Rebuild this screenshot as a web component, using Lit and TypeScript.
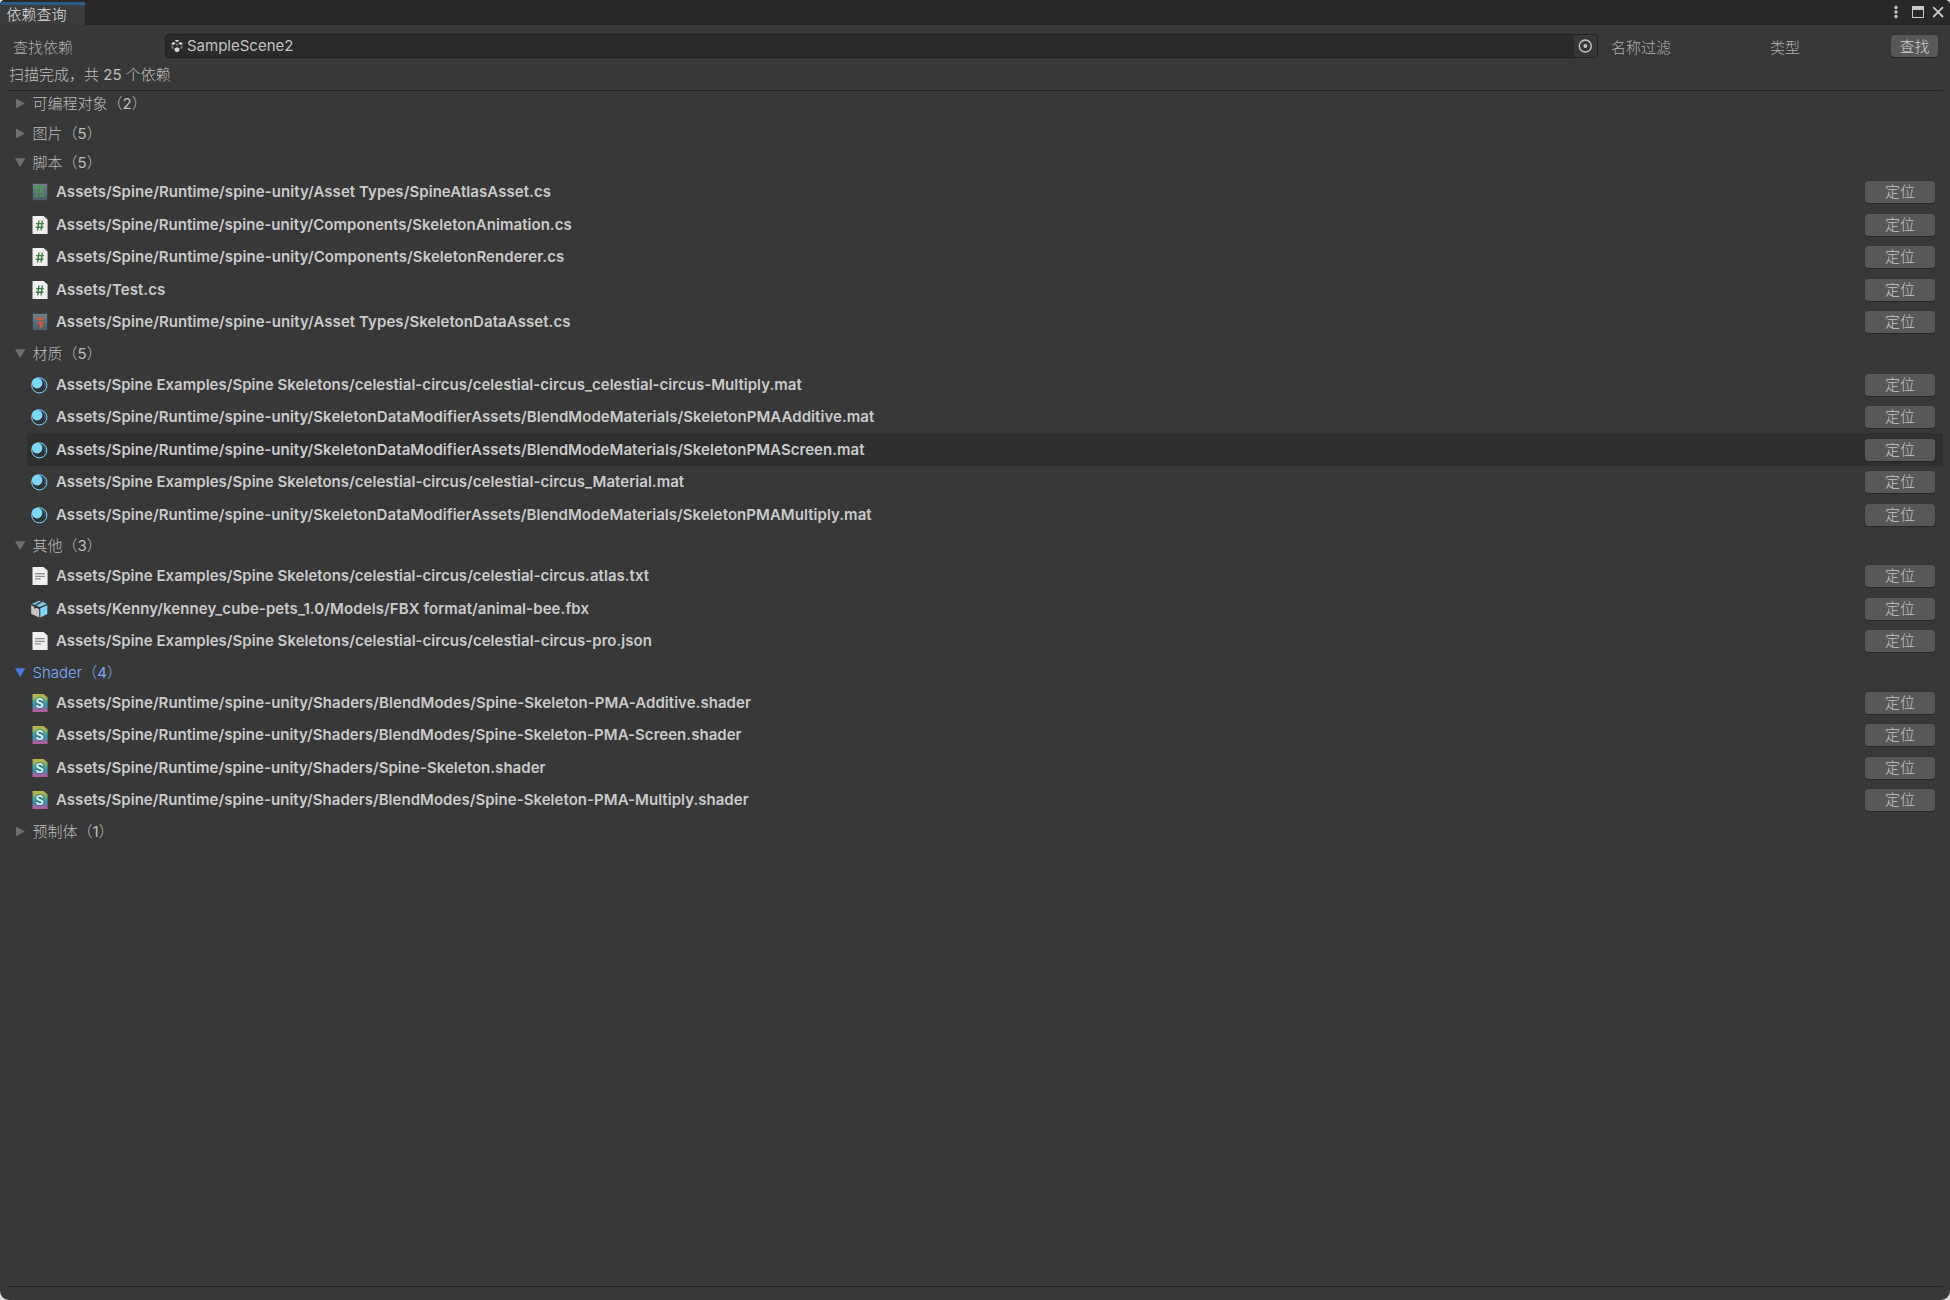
import { LitElement, html, css, svg, nothing } from "lit";
import { customElement, property } from "lit/decorators.js";
import { classMap } from "lit/directives/class-map.js";

type Kind = "atlas" | "cs" | "skeleton" | "mat" | "txt" | "fbx" | "shader";
interface Asset { kind: Kind; path: string; track: number; hover?: boolean }
interface Group { title: string; count: number; above: number; below: number; open: boolean; active?: boolean; items: Asset[] }

const RT = "Assets/Spine/Runtime/spine-unity/";
const EX = "Assets/Spine Examples/Spine Skeletons/celestial-circus/";
const BLEND = RT + "SkeletonDataModifierAssets/BlendModeMaterials/";

const groups: Group[] = [
  { title: "可编程对象", count: 2, above: 0, below: 0, open: false, items: [] },
  { title: "图片", count: 5, above: 3.5, below: 0, open: false, items: [] },
  { title: "脚本", count: 5, above: 3.2, below: 0.3, open: true, items: [
    { kind: "atlas", track: 0.067, path: RT + "Asset Types/SpineAtlasAsset.cs" },
    { kind: "cs", track: 0.05, path: RT + "Components/SkeletonAnimation.cs" },
    { kind: "cs", track: 0.063, path: RT + "Components/SkeletonRenderer.cs" },
    { kind: "cs", track: 0.09, path: "Assets/Test.cs" },
    { kind: "skeleton", track: 0.068, path: RT + "Asset Types/SkeletonDataAsset.cs" },
  ] },
  { title: "材质", count: 5, above: 2.2, below: 1.7, open: true, items: [
    { kind: "mat", track: 0.025, path: EX + "celestial-circus_celestial-circus-Multiply.mat" },
    { kind: "mat", track: 0.053, path: BLEND + "SkeletonPMAAdditive.mat" },
    { kind: "mat", track: 0.05, path: BLEND + "SkeletonPMAScreen.mat", hover: true },
    { kind: "mat", track: 0.027, path: EX + "celestial-circus_Material.mat" },
    { kind: "mat", track: 0.048, path: BLEND + "SkeletonPMAMultiply.mat" },
  ] },
  { title: "其他", count: 3, above: 2.6, below: 0.6, open: true, items: [
    { kind: "txt", track: 0.028, path: EX + "celestial-circus.atlas.txt" },
    { kind: "fbx", track: 0.09, path: "Assets/Kenny/kenney_cube-pets_1.0/Models/FBX format/animal-bee.fbx" },
    { kind: "txt", track: 0.03, path: EX + "celestial-circus-pro.json" },
  ] },
  { title: "Shader", count: 4, above: 2.1, below: 0.8, open: true, active: true, items: [
    { kind: "shader", track: 0.045, path: RT + "Shaders/BlendModes/Spine-Skeleton-PMA-Additive.shader" },
    { kind: "shader", track: 0.035, path: RT + "Shaders/BlendModes/Spine-Skeleton-PMA-Screen.shader" },
    { kind: "shader", track: 0.035, path: RT + "Shaders/Spine-Skeleton.shader" },
    { kind: "shader", track: 0.035, path: RT + "Shaders/BlendModes/Spine-Skeleton-PMA-Multiply.shader" },
  ] },
  { title: "预制体", count: 1, above: 2.8, below: 0, open: false, items: [] },
];

const page = "M2.9 1H13.6L17.6 4.600V18.4Q17.6 19 17 19H3.1Q2.500 19 2.500 18.4V1.6Q2.500 1 2.9 1Z";

const glyphs: Record<Kind, unknown> = {
  atlas: svg`
    <defs><linearGradient id="a" x1="0" y1="0" x2="0" y2="1"><stop offset="0" stop-color="#6e8088"/><stop offset="1" stop-color="#4c5d68"/></linearGradient></defs>
    <rect x="2" y="1" width="16" height="18" fill="#2b3339"/>
    <rect x="2.7" y="1.7" width="14.6" height="16.6" fill="url(#a)"/>
    <path fill="#45a049" d="M5 4H9V7H5ZM10 4H14V6.500H10ZM5 8.500H8.500V11H5ZM10 8H12.500V11H10ZM5 12.500H7.500V15H5ZM9.500 13H11.500V15H9.500ZM12.500 11.500H14V15H12.500Z"/>`,
  skeleton: svg`
    <defs><linearGradient id="a" x1="0" y1="0" x2="0" y2="1"><stop offset="0" stop-color="#6e8088"/><stop offset="1" stop-color="#4c5d68"/></linearGradient></defs>
    <rect x="2" y="1" width="16" height="18" fill="#2b3339"/>
    <rect x="2.700" y="1.700" width="14.600" height="16.600" fill="url(#a)"/>
    <path fill="#f0502c" d="M7.500 5.500H12.500V8H7.500ZM8 9.500H12.700V11.500H11V12.300H12.500V15.500H9.800V13H9.500V11.500H8Z"/>`,
  cs: svg`
    <path d=${page} fill="#f0f0f0"/>
    <path d="M8.900 5.500L7.700 15.300M12.300 5.500L11.100 15.300M6.200 8.600H13.900M5.800 12.200H13.500" stroke="#3f7a45" stroke-width="1.400" fill="none"/>`,
  mat: svg`
    <circle cx="9.300" cy="10.300" r="7.600" fill="#2c3438" stroke="#7fd6fd" stroke-width="1"/>
    <circle cx="7.100" cy="8.100" r="5.300" fill="#7fd6fd"/>
    <path d="M10.500 3.800A6.200 6.200 0 0 1 14.800 12" stroke="#58808f" stroke-width=".8" fill="none"/>`,
  txt: svg`
    <path d=${page} fill="#f0f0f0"/>
    <path d="M5 7.700H14.700M5 10.300H14.700M5 12.900H10.700" stroke="#8c8c8c" stroke-width="1.300"/>`,
  fbx: svg`
    <path d="M1.200 6.200L4 7.800V10L6.300 8.700L9.200 10.300V18.600L1.200 14.800Z" fill="#c8c8c8"/>
    <path d="M10.300 9.200L17.300 6.300V14.900L10.300 18.600Z" fill="#7fd6fd"/>
    <path d="M1.900 5.100L9 1.700L11 2.300L4.700 6.100ZM6 6.700L12.800 2.800L16.800 4.900L9.800 8.100Z" fill="#7fc4e6"/>`,
  shader: svg`
    <defs><linearGradient id="g" x1="0" y1="0" x2="0" y2="1">
      <stop offset="0" stop-color="#c2b648"/><stop offset=".22" stop-color="#9cb35a"/>
      <stop offset=".45" stop-color="#35a7a0"/><stop offset=".68" stop-color="#3d8fae"/>
      <stop offset=".85" stop-color="#9a68a8"/><stop offset="1" stop-color="#c2559a"/>
    </linearGradient></defs>
    <path d=${page} fill="url(#g)"/>
    <text class="s" x="9.700" y="14.600" text-anchor="middle">S</text>`,
};

@customElement("asset-icon")
class AssetIcon extends LitElement {
  @property() kind: Kind = "cs";
  static styles = css`
    :host { display: block; width: 20px; height: 20px; flex: none; }
    svg { display: block; }
    .s { font: 700 12.500px Inter, sans-serif; fill: #e6eeee; stroke: #2c6f7a; stroke-width: 1.400px; paint-order: stroke; }
  `;
  render() {
    return html`<svg width="20" height="20" viewBox="0 0 20 20">${glyphs[this.kind]}</svg>`;
  }
}

@customElement("asset-row")
class AssetRow extends LitElement {
  @property({ attribute: false }) asset!: Asset;
  static styles = css`
    :host { display: block; }
    .row { box-sizing: border-box; height: 32.500px; margin-left: 27px; padding: 0 8px 0 3px; display: flex; align-items: center; }
    .hover { background: #2f2f2f; }
    .path { flex: 1; margin-left: 6px; font-weight: 600; color: #cbcbcb; white-space: pre; }
    .btn { width: 70px; height: 22px; line-height: 22px; border-radius: 3.500px; background: #585858; box-shadow: 0 1px 0 #282828, 0 0 0 .5px #303030; text-align: center; color: #c4c4c4; font-weight: 300; }
  `;
  render() {
    const a = this.asset;
    return html`<div class=${classMap({ row: true, hover: !!a.hover })}>
      <asset-icon kind=${a.kind}></asset-icon>
      <span class="path" style="letter-spacing:${a.track}px">${a.path}</span>
      <div class="btn">定位</div>
    </div>`;
  }
}

@customElement("app-root")
class AppRoot extends LitElement {
  static styles = css`
    :host { display: block; background: #dcdcdc; font: 400 15px/20px Inter, "Noto Sans CJK SC", sans-serif; color: #c0c0c0; }
    .window { box-sizing: border-box; width: 1950px; height: 1300px; background: #383838; border-radius: 5px 5px 9px 9px; overflow: hidden; display: flex; flex-direction: column; }
    .tabs { box-sizing: border-box; height: 25px; background: #282828; border-bottom: 1px solid #212121; display: flex; justify-content: space-between; padding-top: 2px; flex: none; }
    .tab { box-sizing: border-box; width: 85px; height: 23px; background: #3c3c3c; border-top: 3px solid #2c5d87; padding-left: 6.500px; line-height: 20px; color: #e2e2e2; font-weight: 300; border-radius: 3px 0 0 0; }
    .cjk { font-weight: 300; }
    .toolbar { display: flex; align-items: flex-start; height: 38px; padding: 9px 12px 0 13px; box-sizing: border-box; flex: none; }
    .label { font-weight: 300; color: #b0b0b0; line-height: 27px; }
    .first { width: 152px; }
    .field { box-sizing: border-box; width: 1433px; height: 24px; background: #2a2a2a; border: 1px solid #202020; border-radius: 4px; display: flex; align-items: center; padding-left: 4px; overflow: hidden; }
    .name { flex: 1; margin-left: 3px; padding-bottom: 1px; color: #c4c4c4; line-height: 20px; }
    .pick { width: 23px; height: 22px; background: #373737; }
    .filter { margin-left: 13px; width: 159px; }
    .kind { width: 121px; }
    .find { width: 47px; height: 22px; margin-top: 1px; line-height: 23px; border-radius: 4px; background: #585858; box-shadow: 0 1px 0 #242424, 0 0 0 .5px #303030; text-align: center; color: #d2d2d2; font-weight: 300; }
    .status { height: 27px; line-height: 23px; padding-left: 9px; box-sizing: border-box; font-weight: 400; flex: none; }
    .list { margin: 0 7px 0 0; flex: 1; display: flex; flex-direction: column; }
    .line { height: 1px; margin: 0 7px 0 8px; background: #242424; flex: none; }
    .foot { height: 13px; flex: none; }
    .head { height: 26px; padding-left: 15px; display: flex; align-items: center; color: #bdbdbd; }
    .head svg { margin-right: 6.500px; }
    .arrow { fill: #6f6f6f; }
    .head.active { color: #7baefa; }
    .head.active .arrow { fill: #4a79e0; }
    .count { font-weight: 400; }
    .wins { display: block; }
  `;
  private group(g: Group) {
    return html`
      <div class=${classMap({ head: true, active: !!g.active })} style="margin:${g.above}px 0 ${g.below}px">
        <svg width="11" height="12" viewBox="0 0 11 12"><path class="arrow" d=${g.open ? "M0 1.200H10.300L5.150 10.300Z" : "M1 .5L10 5.500L1 10.500Z"}/></svg>
        <span class="cjk">${g.title}（<span class="count">${g.count}</span>）</span>
      </div>
      ${g.open ? g.items.map((a) => html`<asset-row .asset=${a}></asset-row>`) : nothing}`;
  }
  render() {
    return html`<div class="window">
      <div class="tabs">
        <div class="tab">依赖查询</div>
        <svg class="wins" width="60" height="20" viewBox="1890 2 60 20">
          <g fill="#c8c8c8"><circle cx="1896" cy="7.500" r="1.700"/><circle cx="1896" cy="12" r="1.700"/><circle cx="1896" cy="16.500" r="1.700"/>
          <path fill-rule="evenodd" d="M1912 6H1924V18H1912ZM1913 10V17H1923V10Z"/></g>
          <path d="M1933.200 7.200L1943 17M1943 7.200L1933.200 17" stroke="#c8c8c8" stroke-width="1.800"/>
        </svg>
      </div>
      <div class="toolbar">
        <span class="label first">查找依赖</span>
        <div class="field">
          <svg width="14" height="14" viewBox="0 0 14 14">
            <g fill="#dadada"><path d="M4.500 1.800L7 .8L9.500 1.800L7 3Z"/><path d="M1.500 4L3.900 2.900L5.500 4.300L3.700 6L1.500 5.200Z"/><path d="M12.500 4L10.100 2.900L8.500 4.300L10.300 6L12.500 5.200Z"/><path d="M4.700 9.200L7 8.200L9.300 9.200V12L7 13.200L4.700 12Z"/></g>
            <g fill="#777"><path d="M1.500 6L3.400 7.200V10.300L1.500 9.200Z"/><path d="M12.500 6L10.600 7.200V10.300L12.500 9.200Z"/><path d="M5.800 4.500H8.200V6.500H5.800Z"/></g>
          </svg>
          <span class="name">SampleScene2</span>
          <svg class="pick" viewBox="0 0 23 22"><circle cx="11.300" cy="11" r="6" fill="none" stroke="#c4c4c4" stroke-width="1.400"/><circle cx="11.300" cy="11" r="1.900" fill="#c4c4c4"/></svg>
        </div>
        <span class="label filter">名称过滤</span>
        <span class="label kind">类型</span>
        <div class="find">查找</div>
      </div>
      <div class="status"><span class="cjk">扫描完成，共</span> 25 <span class="cjk">个依赖</span></div>
      <div class="line"></div>
      <div class="list">${groups.map((g) => this.group(g))}</div>
      <div class="line"></div>
      <div class="foot"></div>
    </div>`;
  }
}
